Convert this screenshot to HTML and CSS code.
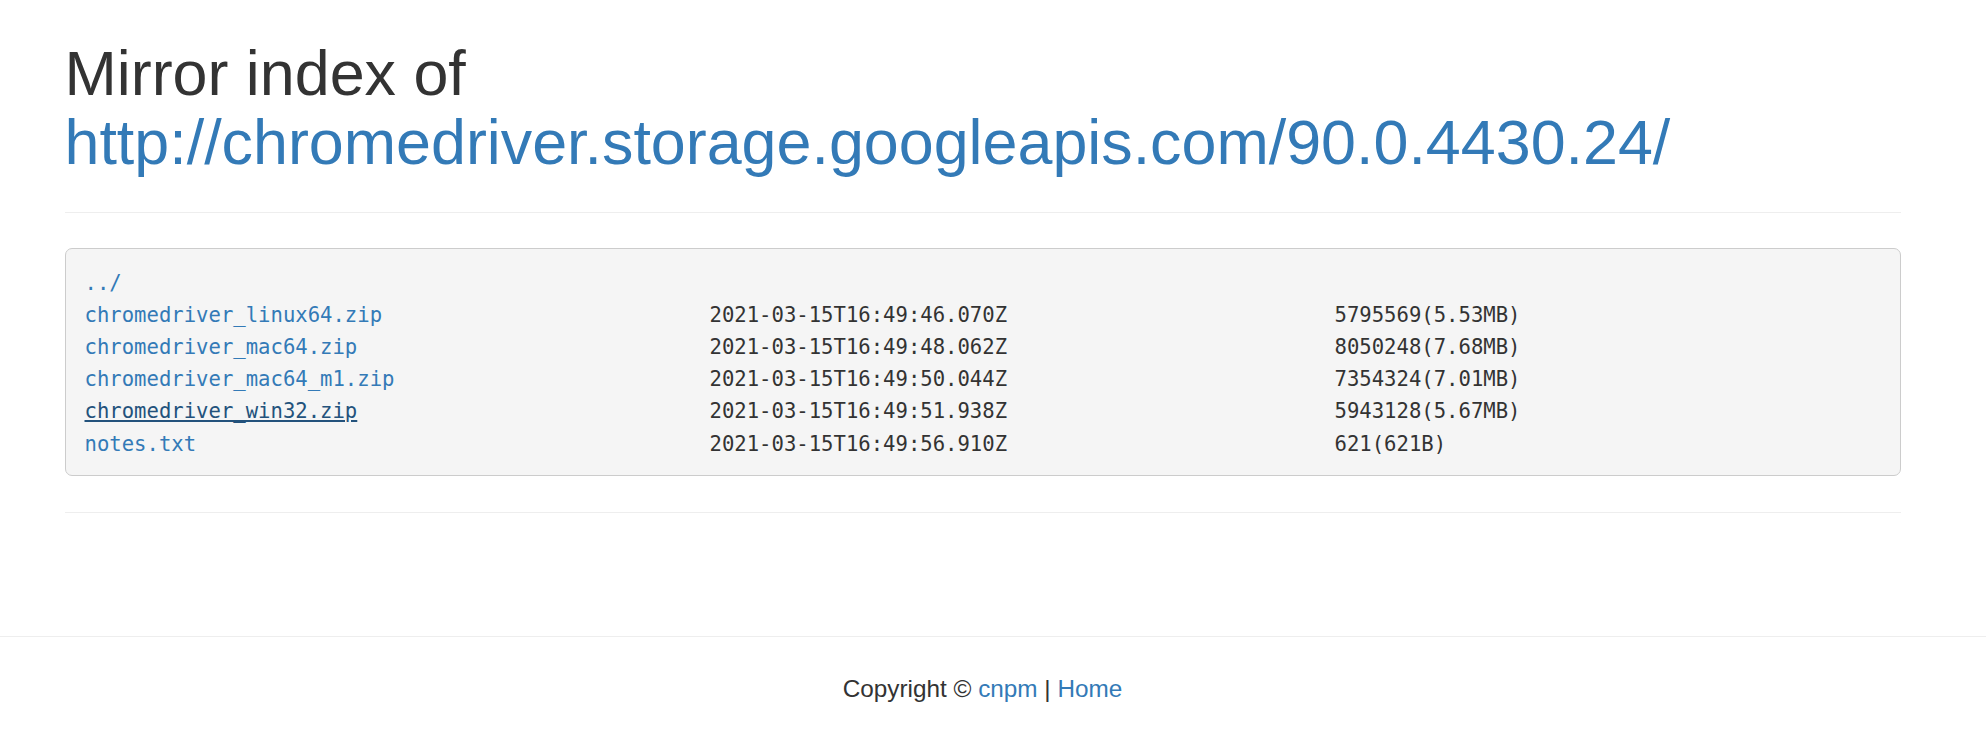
FILE: index.html
```html
<!DOCTYPE html>
<html lang="en">
<head>
<meta charset="utf-8">
<title>Mirror index of http://chromedriver.storage.googleapis.com/90.0.4430.24/</title>
<link rel="stylesheet" href="styles.css">
</head>
<body>
<div class="page">
  <div class="container">
    <div class="page-header">
      <h1>Mirror index of <a href="#">http://chromedriver.storage.googleapis.com/90.0.4430.24/</a></h1>
    </div>
    <div class="listing">
      <div class="row"><a href="#">../</a></div>
      <div class="row"><a href="#">chromedriver_linux64.zip</a><span>2021-03-15T16:49:46.070Z</span><span>5795569(5.53MB)</span></div>
      <div class="row"><a href="#">chromedriver_mac64.zip</a><span>2021-03-15T16:49:48.062Z</span><span>8050248(7.68MB)</span></div>
      <div class="row"><a href="#">chromedriver_mac64_m1.zip</a><span>2021-03-15T16:49:50.044Z</span><span>7354324(7.01MB)</span></div>
      <div class="row"><a href="#" class="active">chromedriver_win32.zip</a><span>2021-03-15T16:49:51.938Z</span><span>5943128(5.67MB)</span></div>
      <div class="row"><a href="#">notes.txt</a><span>2021-03-15T16:49:56.910Z</span><span>621(621B)</span></div>
    </div>
    <hr class="divider">
  </div>
</div>
<footer class="footer">
  <div class="footer-inner">Copyright © <a href="#">cnpm</a> | <a href="#">Home</a></div>
</footer>
</body>
</html>
```

FILE: styles.css
```css
html, body {
  margin: 0;
  padding: 0;
  background: #fff;
}
body {
  font-family: "Liberation Sans", Arial, sans-serif;
  color: #333;
}
a {
  color: #337ab7;
  text-decoration: none;
}
.page {
  width: 1965px;
}
.container {
  width: 1836px;
  margin: 0 auto;
}
.page-header {
  padding-top: 38.7px;
  padding-bottom: 35px;
  border-bottom: 1px solid #eee;
  margin-bottom: 35px;
}
.page-header h1 {
  margin: 0;
  font-size: 62.8px;
  line-height: 69.1px;
  font-weight: 400;
  color: #333;
}
.listing {
  background: #f5f5f5;
  border: 1px solid #ccc;
  border-radius: 7px;
  padding: 17.8px 19px 15px;
  font-family: "DejaVu Sans Mono", monospace;
  font-size: 20.6px;
  line-height: 32.2px;
  color: #333;
}
.row {
  display: grid;
  grid-template-columns: 625px 625px auto;
  white-space: pre;
}
.row a.active {
  color: #23527c;
  text-decoration: underline;
}
.divider {
  margin: 36px 0 0;
  border: 0;
  border-top: 1px solid #eee;
  height: 0;
}
.footer {
  margin-top: 123px;
  border-top: 1px solid #eee;
  padding-top: 35.5px;
  padding-bottom: 40px;
}
.footer-inner {
  width: 1965px;
  text-align: center;
  font-size: 24.3px;
  line-height: 34.9px;
  color: #333;
}
```
